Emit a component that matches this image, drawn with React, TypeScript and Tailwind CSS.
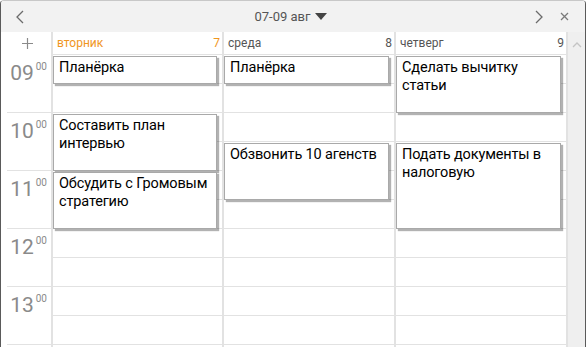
import { ReactNode } from 'react'

type CalEvent = { title: string; start: number; dur: number }
type Day = { name: string; num: number; today?: boolean; width: string; last?: boolean; events: CalEvent[] }

const HOUR = 58
const HOURS = ['09', '10', '11', '12', '13', '']

const DAYS: Day[] = [
  {
    name: 'вторник',
    num: 7,
    today: true,
    width: 'w-[171px]',
    events: [
      { title: 'Планёрка', start: 0, dur: 0.5 },
      { title: 'Составить план интервью', start: 1, dur: 1 },
      { title: 'Обсудить с Громовым стратегию', start: 2, dur: 1 },
    ],
  },
  {
    name: 'среда',
    num: 8,
    width: 'w-[172px]',
    events: [
      { title: 'Планёрка', start: 0, dur: 0.5 },
      { title: 'Обзвонить 10 агенств', start: 1.5, dur: 1 },
    ],
  },
  {
    name: 'четверг',
    num: 9,
    width: 'w-[174px]',
    last: true,
    events: [
      { title: 'Сделать вычитку статьи', start: 0, dur: 1 },
      { title: 'Подать документы в налоговую', start: 1.5, dur: 1.5 },
    ],
  },
]

function Chevron({ dir }: { dir: 'left' | 'right' | 'up' }) {
  const d = dir === 'left' ? 'M7 1 L1 7 L7 13' : dir === 'right' ? 'M1 1 L7 7 L1 13' : 'M1 6 L5 2 L9 6'
  const size = dir === 'up' ? { w: 10, h: 8 } : { w: 8, h: 14 }
  return (
    <svg width={size.w} height={size.h} viewBox={`0 0 ${size.w} ${size.h}`} fill="none">
      <path d={d} stroke={dir === 'up' ? '#c4c4c4' : '#6b6b6b'} strokeWidth="1.3" />
    </svg>
  )
}

function EventBox({ ev }: { ev: CalEvent }) {
  return (
    <div
      className="absolute left-0 right-[5px] bg-white border border-[#a9a9a9] shadow-[2px_2px_1px_rgba(0,0,0,0.3)] pl-[5px] pr-[2px] pt-[2px] text-[14.5px] tracking-[-0.15px] leading-[18px] text-black overflow-hidden"
      style={{ top: ev.start * HOUR + 1, height: ev.dur * HOUR - 1 }}
    >
      {ev.title}
    </div>
  )
}

function Cell({ children }: { children?: ReactNode }) {
  return <div className="h-[29px] border-b border-[#e2e2e2]">{children}</div>
}

export default function App() {
  return (
    <div
      className="w-[586px] h-[347px] overflow-hidden bg-white border-l border-r border-t border-[#5a5a5a] border-t-[#c8c8c8] rounded-t-[4px] flex flex-col"
      style={{ fontFamily: 'Roboto, "Noto Sans", sans-serif' }}
    >
      {/* top bar */}
      <div className="h-[31px] shrink-0 bg-[#f2f2f2] flex items-center px-[15px]">
        <Chevron dir="left" />
        <div className="flex-1 flex items-center justify-center gap-[4px] pl-[22px] text-[13px] text-[#555]">
          <span>07-09 авг</span>
          <svg width="12" height="7" viewBox="0 0 12 7">
            <path d="M0 0 L12 0 L6 7 Z" fill="#444" />
          </svg>
        </div>
        <Chevron dir="right" />
        <svg width="9" height="9" viewBox="0 0 9 9" className="ml-[17px] mr-[1px]">
          <path d="M1 1 L8 8 M8 1 L1 8" stroke="#7a7a7a" strokeWidth="1.3" />
        </svg>
      </div>

      <div className="flex flex-1 min-h-0">
        {/* gutter */}
        <div className="w-[50px] shrink-0 flex flex-col">
          <div className="h-[23px] shrink-0 flex items-center justify-center pl-[2px]">
            <svg width="11" height="11" viewBox="0 0 11 11">
              <path d="M5.5 0 V11 M0 5.5 H11" stroke="#8a8a8a" strokeWidth="1.2" />
            </svg>
          </div>
          {HOURS.map((h, i) => (
            <div key={i} className="h-[58px] shrink-0 ml-[6px] border-b border-[#e2e2e2] flex justify-end pr-[4px] pt-[6px] text-[#8a8a8a]">
              {h && (
                <>
                  <span className="text-[21px] leading-[24px]">{h}</span>
                  <span className="text-[10px] leading-[12px] ml-[2px]">00</span>
                </>
              )}
            </div>
          ))}
        </div>

        {/* days */}
        {DAYS.map((day) => (
          <div
            key={day.name}
            className={`${day.width} shrink-0 flex flex-col border-l-2 border-[#e2e2e2] ${day.last ? 'border-r-2' : ''}`}
          >
            <div
              className={`h-[23px] shrink-0 flex items-center justify-between pl-[4px] pr-[2px] text-[12px] border-b border-[#e2e2e2] ${
                day.today ? 'text-[#f0961e]' : 'text-[#555]'
              }`}
            >
              <span>{day.name}</span>
              <span>{day.num}</span>
            </div>
            <div className="relative flex-1">
              {HOURS.map((_, i) => (
                <div key={i}>
                  <Cell />
                  <Cell />
                </div>
              ))}
              {day.events.map((ev) => (
                <EventBox key={ev.title} ev={ev} />
              ))}
            </div>
          </div>
        ))}

        {/* scrollbar */}
        <div className="flex-1 bg-[#efefef] flex justify-center pt-[9px]">
          <Chevron dir="up" />
        </div>
      </div>
    </div>
  )
}
